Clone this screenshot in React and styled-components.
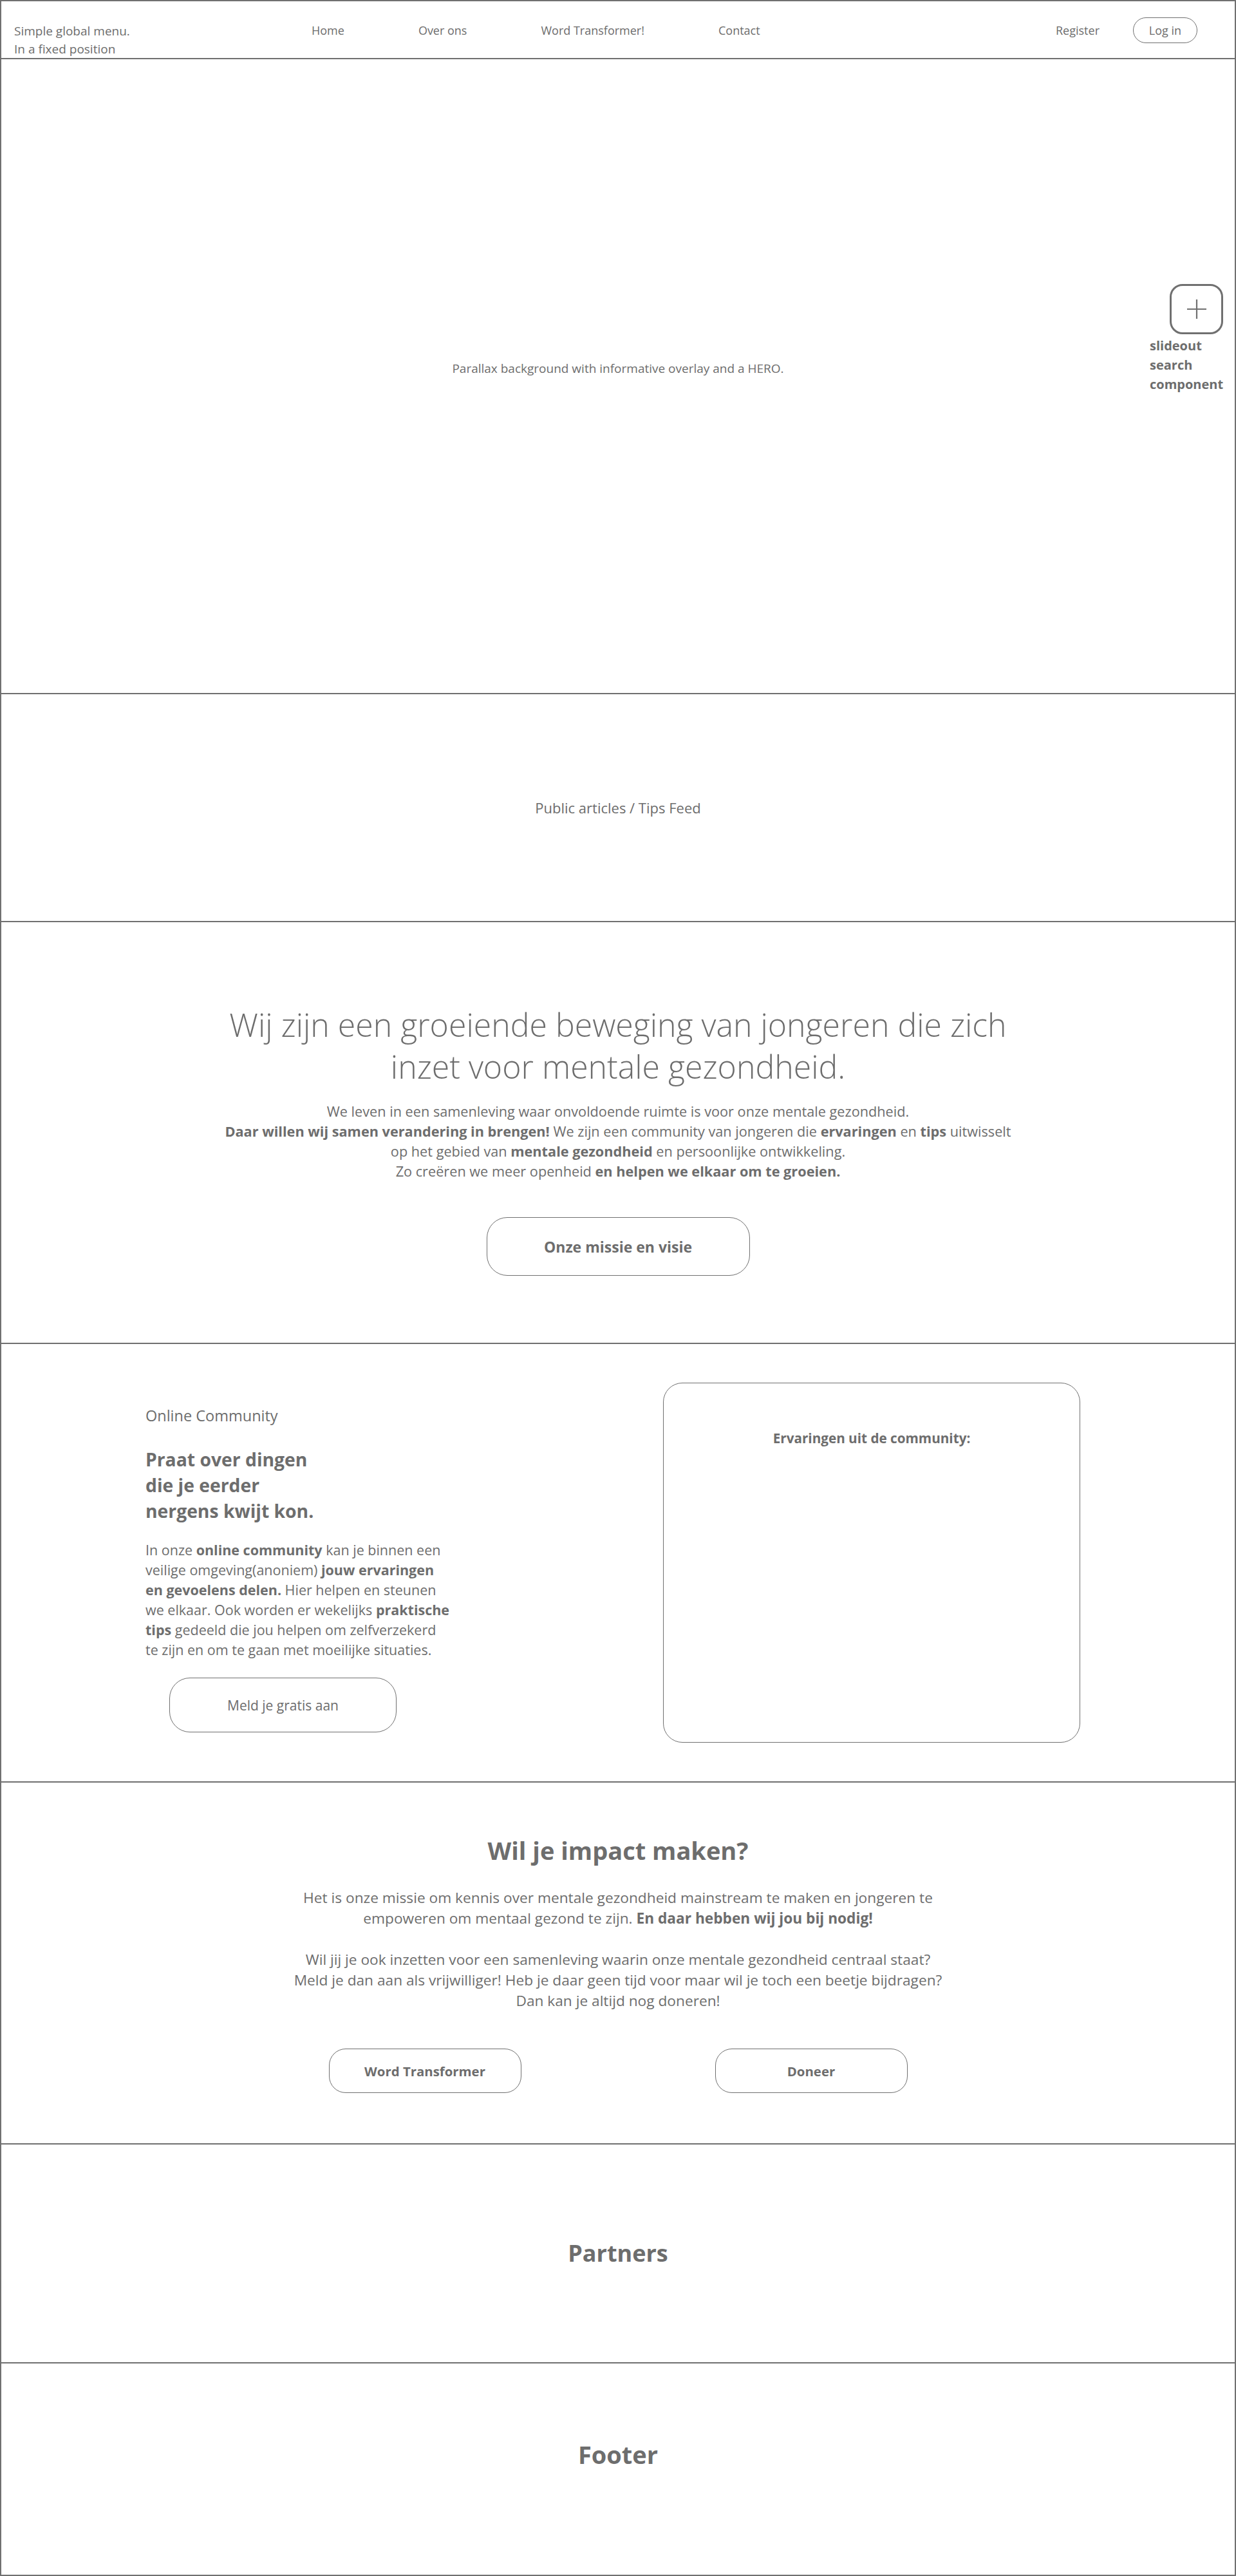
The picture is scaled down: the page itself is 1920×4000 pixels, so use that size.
import React from "react";
import styled, { createGlobalStyle } from "styled-components";

const ink = "#6d6d6d";
const rule = "#707070";

const GlobalStyle = createGlobalStyle`
  html, body {
    margin: 0;
    padding: 0;
    background: #fff;
  }
  body {
    font-family: "Open Sans", "Noto Sans", Arial, sans-serif;
    color: ${ink};
  }
  * {
    box-sizing: border-box;
  }
  p {
    margin: 0;
  }
`;

const Page = styled.div`
  width: 1920px;
  height: 4000px;
  border: 2px solid ${rule};
  display: flex;
  flex-direction: column;
`;

const Section = styled.section`
  position: relative;
  flex-shrink: 0;
  height: ${p => p.h}px;
  border-bottom: ${p => (p.last ? "none" : `2px solid ${rule}`)};
  display: flex;
  flex-direction: column;
  align-items: center;
  justify-content: ${p => p.justify || "center"};
  padding-top: ${p => p.pt || 0}px;
  padding-bottom: ${p => p.pb || 0}px;
`;

/* ---------- nav ---------- */

const Nav = styled.header`
  flex-shrink: 0;
  height: 90px;
  border-bottom: 2px solid ${rule};
  display: flex;
  align-items: center;
  padding: 2px 58px 0 20px;
  font-size: 18px;
`;

const Tagline = styled.div`
  width: 462px;
  align-self: flex-end;
  font-size: 19px;
  line-height: 28px;
`;

const Menu = styled.nav`
  display: flex;
  gap: 115px;
`;

const NavLink = styled.a`
  color: ${ink};
  text-decoration: none;
`;

const Account = styled.div`
  margin-left: auto;
  display: flex;
  align-items: center;
  gap: 52px;
`;

const Pill = styled.button`
  width: 100px;
  height: 40px;
  border: 1px solid ${rule};
  border-radius: 20px;
  background: #fff;
  color: ${ink};
  font: inherit;
  font-size: 18px;
  padding: 0;
`;

/* ---------- hero ---------- */

const Note = styled.p`
  font-size: ${p => p.size || 19}px;
`;

const Slideout = styled.div`
  position: absolute;
  top: 349px;
  right: 14px;
  width: 118px;
  display: flex;
  flex-direction: column;
  align-items: flex-end;
`;

const PlusBox = styled.button`
  width: 83px;
  height: 78px;
  margin-right: 4px;
  border: 3px solid ${rule};
  border-radius: 20px;
  background: #fff;
  display: flex;
  align-items: center;
  justify-content: center;
  padding: 0;
`;

const SlideLabel = styled.div`
  align-self: stretch;
  margin-top: 3px;
  font-size: 20px;
  font-weight: 700;
  line-height: 30px;
`;

/* ---------- mission ---------- */

const BigTitle = styled.h1`
  margin: 0;
  font-size: 50px;
  font-weight: 300;
  line-height: 65px;
  text-align: center;
`;

const Lead = styled.p`
  margin-top: ${p => p.mt || 0}px;
  font-size: ${p => p.size || 21.7}px;
  line-height: ${p => p.lh || 31}px;
  text-align: center;
  white-space: nowrap;
  b {
    font-weight: 700;
  }
`;

const OutlineButton = styled.button`
  width: ${p => p.w}px;
  height: ${p => p.h}px;
  border: 1px solid ${rule};
  border-radius: ${p => p.r}px;
  background: #fff;
  color: ${ink};
  font-family: inherit;
  font-size: ${p => p.size || 21}px;
  font-weight: ${p => (p.bold ? 700 : 400)};
  margin-top: ${p => p.mt || 0}px;
  margin-left: ${p => p.ml || 0}px;
  padding: 0;
`;

/* ---------- community ---------- */

const Split = styled.div`
  width: 100%;
  display: grid;
  grid-template-columns: 804px 648px;
  padding-left: 224px;
`;

const Column = styled.div`
  padding-top: 36px;
  display: flex;
  flex-direction: column;
  align-items: flex-start;
`;

const Eyebrow = styled.div`
  font-size: 23.5px;
  line-height: 30px;
`;

const SubTitle = styled.h2`
  margin: 33px 0 0;
  font-size: 28.3px;
  font-weight: 700;
  line-height: 40px;
`;

const Body = styled.p`
  margin-top: 25px;
  font-size: 21.5px;
  line-height: 31px;
  white-space: nowrap;
  b {
    font-weight: 700;
  }
`;

const Card = styled.div`
  height: 559px;
  border: 1px solid ${rule};
  border-radius: 30px;
  padding-top: 70px;
  text-align: center;
  font-size: 20.7px;
  font-weight: 700;
  line-height: 30px;
`;

/* ---------- impact ---------- */

const Heading = styled.h2`
  margin: 0;
  font-size: ${p => p.size || 38}px;
  font-weight: 700;
  line-height: 50px;
`;

const ButtonRow = styled.div`
  margin-top: 58px;
  display: flex;
  gap: 301px;
`;

const PlusIcon = () => (
  <svg width="34" height="34" viewBox="0 0 34 34" fill="none">
    <path d="M17 2v30M2 17h30" stroke={rule} strokeWidth="2.2" />
  </svg>
);

export default function App() {
  return (
    <>
      <GlobalStyle />
      <Page>
        <Nav>
          <Tagline>
            Simple global menu.
            <br />
            In a fixed position
          </Tagline>
          <Menu>
            <NavLink>Home</NavLink>
            <NavLink>Over ons</NavLink>
            <NavLink>Word Transformer!</NavLink>
            <NavLink>Contact</NavLink>
          </Menu>
          <Account>
            <NavLink>Register</NavLink>
            <Pill>Log in</Pill>
          </Account>
        </Nav>

        <Section h={986} pb={24}>
          <Note>Parallax background with informative overlay and a HERO.</Note>
          <Slideout>
            <PlusBox>
              <PlusIcon />
            </PlusBox>
            <SlideLabel>
              slideout
              <br />
              search
              <br />
              component
            </SlideLabel>
          </Slideout>
        </Section>

        <Section h={354}>
          <Note size={22}>Public articles / Tips Feed</Note>
        </Section>

        <Section h={655} justify="flex-start" pt={127}>
          <BigTitle>
            Wij zijn een groeiende beweging van jongeren die zich
            <br />
            inzet voor mentale gezondheid.
          </BigTitle>
          <Lead mt={21}>
            We leven in een samenleving waar onvoldoende ruimte is voor onze mentale gezondheid.
            <br />
            <b>Daar willen wij samen verandering in brengen!</b> We zijn een community van jongeren die{" "}
            <b>ervaringen</b> en <b>tips</b> uitwisselt
            <br />
            op het gebied van <b>mentale gezondheid</b> en persoonlijke ontwikkeling.
            <br />
            Zo creëren we meer openheid <b>en helpen we elkaar om te groeien.</b>
          </Lead>
          <OutlineButton w={409} h={91} r={32} size={23} bold mt={56}>
            Onze missie en visie
          </OutlineButton>
        </Section>

        <Section h={681} justify="flex-start" pt={60}>
          <Split>
            <Column>
              <Eyebrow>Online Community</Eyebrow>
              <SubTitle>
                Praat over dingen
                <br />
                die je eerder
                <br />
                nergens kwijt kon.
              </SubTitle>
              <Body>
                In onze <b>online community</b> kan je binnen een
                <br />
                veilige omgeving(anoniem) <b>jouw ervaringen</b>
                <br />
                <b>en gevoelens delen.</b> Hier helpen en steunen
                <br />
                we elkaar. Ook worden er wekelijks <b>praktische</b>
                <br />
                <b>tips</b> gedeeld die jou helpen om zelfverzekerd
                <br />
                te zijn en om te gaan met moeilijke situaties.
              </Body>
              <OutlineButton w={353} h={85} r={32} mt={28} ml={37}>
                Meld je gratis aan
              </OutlineButton>
            </Column>
            <Card>Ervaringen uit de community:</Card>
          </Split>
        </Section>

        <Section h={562} justify="flex-start" pt={80}>
          <Heading>Wil je impact maken?</Heading>
          <Lead mt={33} lh={32} size={22.7}>
            Het is onze missie om kennis over mentale gezondheid mainstream te maken en jongeren te
            <br />
            empoweren om mentaal gezond te zijn. <b>En daar hebben wij jou bij nodig!</b>
            <br />
            <br />
            Wil jij je ook inzetten voor een samenleving waarin onze mentale gezondheid centraal staat?
            <br />
            Meld je dan aan als vrijwilliger! Heb je daar geen tijd voor maar wil je toch een beetje bijdragen?
            <br />
            Dan kan je altijd nog doneren!
          </Lead>
          <ButtonRow>
            <OutlineButton w={299} h={69} r={26} size={20.4} bold>
              Word Transformer
            </OutlineButton>
            <OutlineButton w={299} h={69} r={26} size={20.4} bold>
              Doneer
            </OutlineButton>
          </ButtonRow>
        </Section>

        <Section h={340}>
          <Heading size={36}>Partners</Heading>
        </Section>

        <Section h={328} last pb={46}>
          <Heading size={38}>Footer</Heading>
        </Section>
      </Page>
    </>
  );
}
